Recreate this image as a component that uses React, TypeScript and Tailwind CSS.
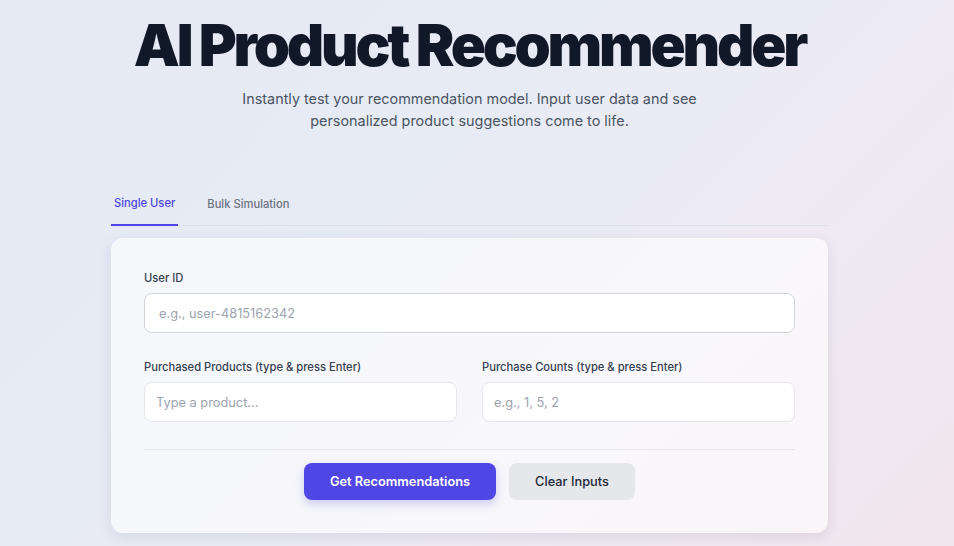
import React from "react";

export default function App() {
  return (
    <div
      className="min-h-[546px] w-full overflow-hidden"
      style={{ fontFamily: "Inter, 'Noto Sans', sans-serif" }}
    >
      <div className="min-h-[546px] w-full bg-[linear-gradient(135deg,#e4e9f4_0%,#e6ebf5_35%,#eeebf5_65%,#f1e5ed_100%)]">
        <div className="w-[939px] flex flex-col items-center pt-[15px]">
          <h1 className="text-[58px] leading-[60px] font-black tracking-[-0.055em] text-[#111827]">
            AI Product Recommender
          </h1>
          <p className="mt-[13px] text-[14.4px] leading-[22px] text-[#4b5563] text-center w-[470px]">
            Instantly test your recommendation model. Input user data and see personalized product suggestions come to life.
          </p>

          <div className="mt-[63px] w-[717px]">
            <div className="flex gap-[26px] border-b border-[#dde1ea]">
              <button className="px-[3px] pb-[13px] text-[11.2px] leading-4 font-medium text-[#4f46e5] border-b-2 border-[#4f46e5] -mb-px">
                Single User
              </button>
              <button className="px-[3px] pb-[13px] text-[11.2px] leading-4 font-medium text-[#6b7280]">
                Bulk Simulation
              </button>
            </div>

            <div className="mt-[12px] rounded-xl bg-white/60 shadow-[0_4px_14px_rgba(30,41,59,0.10)] px-[33px] pt-[32px] pb-[33px]">
              <label className="block text-[11.2px] leading-4 font-medium text-[#374151]">User ID</label>
              <input
                className="mt-[7px] block w-full h-[40px] rounded-lg border border-[#d1d5db] bg-white px-[14px] text-[12.8px] text-[#111827] placeholder:text-[#9ca3af] outline-none"
                placeholder="e.g., user-4815162342"
              />

              <div className="mt-[26px] grid grid-cols-2 gap-[25px]">
                <div>
                  <label className="block text-[11.2px] leading-4 font-medium text-[#374151]">
                    Purchased Products (type &amp; press Enter)
                  </label>
                  <input
                    className="mt-[7px] block w-full h-[40px] rounded-lg border border-[#e5e7eb] bg-white px-[11px] text-[12.8px] text-[#111827] placeholder:text-[#9ca3af] outline-none"
                    placeholder="Type a product..."
                  />
                </div>
                <div>
                  <label className="block text-[11.2px] leading-4 font-medium text-[#374151]">
                    Purchase Counts (type &amp; press Enter)
                  </label>
                  <input
                    className="mt-[7px] block w-full h-[40px] rounded-lg border border-[#e5e7eb] bg-white px-[11px] text-[12.8px] text-[#111827] placeholder:text-[#9ca3af] outline-none"
                    placeholder="e.g., 1, 5, 2"
                  />
                </div>
              </div>

              <div className="mt-[27px] border-t border-[#e5e7eb]" />

              <div className="mt-[13px] flex justify-center gap-[13px]">
                <button className="h-[37px] w-[192px] rounded-lg bg-[#4f46e5] text-white text-[12.8px] font-semibold shadow-[0_4px_10px_rgba(79,70,229,0.25)]">
                  Get Recommendations
                </button>
                <button className="h-[37px] w-[126px] rounded-lg bg-[#e5e7eb] text-[#1f2937] text-[12.8px] font-medium">
                  Clear Inputs
                </button>
              </div>
            </div>
          </div>
        </div>
      </div>
    </div>
  );
}
